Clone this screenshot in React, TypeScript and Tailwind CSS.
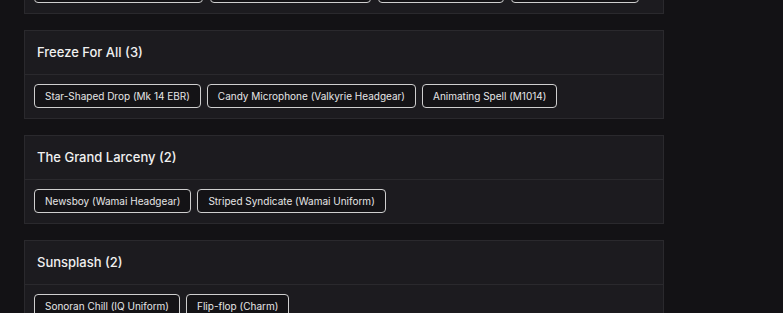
const groups = [
  {
    title: 'Freeze For All (3)',
    items: ['Star-Shaped Drop (Mk 14 EBR)', 'Candy Microphone (Valkyrie Headgear)', 'Animating Spell (M1014)'],
  },
  {
    title: 'The Grand Larceny (2)',
    items: ['Newsboy (Wamai Headgear)', 'Striped Syndicate (Wamai Uniform)'],
  },
  {
    title: 'Sunsplash (2)',
    items: ['Sonoran Chill (IQ Uniform)', 'Flip-flop (Charm)'],
  },
];

const chipClass =
  'flex h-[24px] items-center rounded-[4px] border border-[#cfcfcf] bg-[#141316] px-[10px] text-[10px] text-[#e6e6e6]';

// the card above the fold: only its last row of chips is on screen
function ScrolledCard() {
  const widths = ['w-[169px]', 'w-[161px]', 'w-[126px]', 'w-[128px]'];
  return (
    <section className="mt-[-75px] w-[640px] border border-[#2a292d] bg-[#1c1b1f]">
      <div className="h-[44px] border-b border-[#2a292d]" />
      <div className="flex gap-[7px] px-[9px] pb-[10px] pt-[9px]">
        {widths.map((w) => (
          <span key={w} className={`${chipClass} ${w}`} />
        ))}
      </div>
    </section>
  );
}

function GroupCard({ title, items }: { title: string; items: string[] }) {
  return (
    <section className="w-[640px] border border-[#2a292d] bg-[#1c1b1f]">
      <div className="flex h-[44px] items-center border-b border-[#2a292d] px-3">
        <h3 className="text-[13px] font-medium text-[#f0f0f0]">{title}</h3>
      </div>
      <div className="flex flex-wrap gap-[6px] px-[9px] pb-[10px] pt-[9px]">
        {items.map((item) => (
          <span key={item} className={chipClass}>
            {item}
          </span>
        ))}
      </div>
    </section>
  );
}

export default function App() {
  return (
    <div className="h-[313px] w-[783px] overflow-hidden bg-[#131215] font-['Inter',sans-serif]">
      <div className="flex flex-col gap-4 pl-6">
        <ScrolledCard />
        {groups.map((g) => (
          <GroupCard key={g.title} title={g.title} items={g.items} />
        ))}
      </div>
    </div>
  );
}
